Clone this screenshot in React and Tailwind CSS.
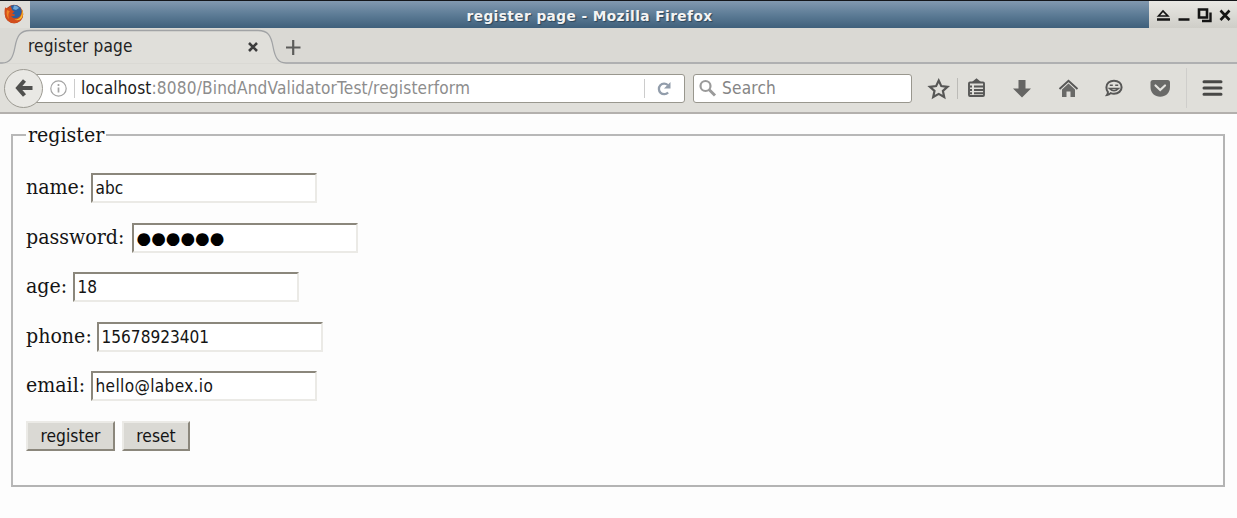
import React from "react";

const SANS = "font-['DejaVu_Sans_Condensed','DejaVu_Sans',sans-serif] [font-stretch:condensed]";
const SERIF = "font-['DejaVu_Serif_Condensed','DejaVu_Serif',serif] [font-stretch:condensed]";

function FirefoxLogo() {
  return (
    <svg width="20" height="20" viewBox="0 0 20 20">
      <circle cx="10" cy="10" r="9.2" fill="#b8431c" />
      <circle cx="10.5" cy="8.5" r="7.5" fill="#2b5f9e" />
      <path d="M10 1.5c2 0 4 1 5 2.500l-3 2-3-1z" fill="#6fa9d8" />
      <path d="M1.200 3.200c-.9 3-.9 6 .1 9.300C3 17 6.500 19.300 10.300 19.200c5 0 8.700-4 8.900-9 0-2-.6-4-1.700-5.400.5 2 .3 4-.7 5.700-1.200 3-4 4.300-6.700 3.700-1.500-.3-2.600-1.200-3-2.200 1.600.6 3 0 4.300-1-.8-1-2-.8-3-1 .3-1.500 1.500-1.600 2.300-2.500-1.200-.2-2.300-.8-2.800-2L6.800 2.200C5.600 2.600 4.700 3.200 4 4.200 3 4.200 1.800 3.800 1.200 3.200z" fill="#d24d1c" />
      <path d="M17.500 4.800c1 3.500.4 6.200-1.200 8.200-1.600 2-3.800 2.700-6 2.500 2.700 1.500 6 .8 7.700-2 1.400-2.700 1.200-6.200-.5-8.700z" fill="#f6c02e" />
      <path d="M3 6c-1 3.500-.2 7 2 9.200C4 12 4.200 9 5.800 7.200z" fill="#ef8426" />
    </svg>
  );
}

function TitleBar() {
  return (
    <div className="flex h-7 border-t border-[#14161a] bg-[#dfded9]">
      <div className="flex w-[30px] items-center pb-[2px] pl-[4px]"><FirefoxLogo /></div>
      <div className="flex flex-1 items-center justify-center bg-linear-to-b from-[#8299b0] via-[#5d7c96] to-[#3f607b]">
        <span className="mt-[4px] whitespace-nowrap font-['DejaVu_Sans',sans-serif] text-[13.700px] font-bold tracking-[0.430px] text-[#f4f4f4] [text-shadow:1px_1px_1px_#2c4559]">register page - Mozilla Firefox</span>
      </div>
      <svg width="88" height="27" viewBox="0 0 88 27" className="bg-linear-to-b from-[#e9e8e4] to-[#cfcec8]" fill="none" stroke="#151515" strokeWidth="2">
        <path d="M9.500 15 14 10l4.800 5z" strokeWidth="1.700" />
        <path d="M8 18.500h13M29.500 18.500h11" strokeWidth="2.600" />
        <path d="M50 8.500h8v8h-8z" strokeWidth="2.600" />
        <path d="M61.500 11.500v8.500H53" strokeWidth="2.400" />
        <path d="m71.500 9.500 9 9.500m0-9.500-9 9.500" strokeWidth="2.600" />
      </svg>
    </div>
  );
}

function TabBar() {
  return (
    <div className={`relative h-9 bg-[#dad9d4] ${SANS}`}>
      <svg width="1237" height="36" viewBox="0 0 1237 36" className="absolute inset-0">
        <path d="M0 35h2c8 0 11-5 13-16C17 8 20 2.500 30 2.500h228c10 0 13 5 15 16 2 11 5 16.500 13 16.500z" fill="#e0dfda" />
        <path d="M0 35h2c8 0 11-5 13-16C17 8 20 2.500 30 2.500h228c10 0 13 5 15 16 2 11 5 16.500 13 16.500h951" fill="none" stroke="#a1a3a5" strokeWidth="1.300" />
        <path d="m249 15 8 8m0-8-8 8" stroke="#3c3c3c" strokeWidth="2.600" />
        <path d="M286 19.500h14.500M293.200 12v15" stroke="#5c5c5a" strokeWidth="2.200" />
      </svg>
      <span className="relative ml-7 block pt-[6px] text-[17.100px] leading-[24px] tracking-[0.150px] text-[#222]">register page</span>
    </div>
  );
}

function ToolIcons() {
  return (
    <svg width="325" height="49" viewBox="912 64 325 49" fill="none" stroke="#575756" strokeWidth="2">
      <path d="m938.700 80.500 2.600 5.600 6.200.7-4.600 4.200 1.300 6-5.500-3.100-5.500 3.100 1.300-6-4.600-4.200 6.200-.7z" strokeWidth="2.200" />
      <path d="M957.500 78v21" stroke="#bcbbb7" strokeWidth="1" />
      <path d="M970 82.500h13q1 0 1 1v11.500q0 1-1 1h-13q-1 0-1-1V83.500q0-1 1-1zM974 86.500h10M974 90h10M974 93.300h10M970 86.500h2M970 90h2M970 93.300h2" strokeWidth="1.900" />
      <path d="m972 82 4.500-3.700L981 82z" fill="#575756" stroke="none" />
      <path d="M1018.500 80h7v8.500h5.500l-9 9-9-9h5.500z" fill="#656563" stroke="none" />
      <path d="m1059.500 89 9-8.200 9 8.200" strokeWidth="2" />
      <path d="m1062 89.500 6.500-6 6.500 6V97h-4.500v-5.500h-4V97H1062z" fill="#696967" stroke="none" />
      <path d="M1114 80.700c4.400 0 7.600 2.700 7.600 6.500s-3.200 6.500-7.600 6.500c-1.200 0-2.300-.2-3.300-.6-1 1-2.300 1.700-3.700 1.900.7-1 1-2 .9-3-1-1.200-1.500-2.900-1.500-4.800 0-3.800 3.200-6.500 7.600-6.500z" />
      <path d="M1109.800 85.200h3M1115.200 85.200h3M1109.500 88.500q4.500 4.500 9 0z" strokeWidth="1.600" />
      <path d="M1153 80h14.500q2.500 0 2.500 2.500v4.500c0 6-4.500 9.800-9.800 9.800s-9.700-3.800-9.700-9.800v-4.500q0-2.500 2.500-2.500z" fill="#6a6a68" stroke="none" />
      <path d="m1155.500 85.500 4.700 4.500 4.800-4.500" stroke="#e4e3df" strokeWidth="2.200" strokeLinecap="round" />
      <path d="M1186.500 68v40" stroke="#cfcecb" strokeWidth="1" />
      <path d="M1204 81.800h17M1204 88h17M1204 94.200h17" stroke="#484846" strokeWidth="3" strokeLinecap="round" />
    </svg>
  );
}

function NavBar() {
  return (
    <div className={`flex h-[50px] items-center border-b-2 border-[#b3b0ad] bg-[#e0dfda] text-[17.100px] ${SANS}`}>
      <div className="z-10 ml-1 flex size-[39px] items-center justify-center rounded-full border border-[#9c9a92] bg-[#e9e8e4]">
        <svg width="18" height="18" viewBox="0 0 18 18" fill="none" stroke="#50504e" strokeWidth="4">
          <path d="M9.500 1.500 3 9l6.500 7.500M3 9h14.500" />
        </svg>
      </div>
      <div className="-ml-2 flex h-[29px] w-[650px] items-center rounded-r-[3px] border border-[#99978e] bg-white">
        <svg width="40" height="27" viewBox="0 0 40 27" fill="none" stroke="#a3a3a3">
          <circle cx="22.500" cy="13.500" r="7.700" strokeWidth="1.200" />
          <path d="M22.500 12.500v5M22.500 9v2" strokeWidth="1.700" />
          <path d="M38.500 4v19" stroke="#ccc" />
        </svg>
        <span className="ml-[5px] flex-1 pt-[2px] whitespace-nowrap tracking-[0.165px] text-[#8d8d8d]"><span className="text-[#1c1c1c]">localhost</span>:8080/BindAndValidatorTest/registerform</span>
        <svg width="40" height="27" viewBox="0 0 40 27" fill="none">
          <path d="M.5 4v19" stroke="#ccc" />
          <path d="M23.800 10a5.300 5.300 0 1 0 .3 7.500" stroke="#929dab" strokeWidth="2.300" />
          <path d="M26.500 7v6.500H20z" fill="#929dab" />
        </svg>
      </div>
      <div className="ml-[8px] flex h-[29px] w-[219px] items-center rounded-[3px] border border-[#99978e] bg-white text-[#858585]">
        <svg width="28" height="27" viewBox="0 0 28 27" fill="none" stroke="#9a9a9a">
          <circle cx="11.500" cy="11" r="5" strokeWidth="2.200" />
          <path d="m15 14.500 6 6" strokeWidth="3" />
        </svg>
        <span className="pt-[2px] tracking-[0.200px]">Search</span>
      </div>
      <ToolIcons />
    </div>
  );
}

function Field({ label, labelWidth, children }) {
  return (
    <div className="mb-[19.600px] flex h-[30px]">
      <label className={`shrink-0 whitespace-nowrap leading-[28px] ${labelWidth}`}>{label}</label>
      <div className={`h-[30px] w-[226px] border-2 border-t-[#8b877c] border-r-[#ebeae6] border-b-[#ebeae6] border-l-[#8b877c] bg-white pl-[2.500px] text-[17.100px] leading-[26px] ${SANS}`}>{children}</div>
    </div>
  );
}

function FormButton({ children, width }) {
  return (
    <button className={`h-[30px] border-2 border-t-[#ebeae6] border-r-[#8b877c] border-b-[#8b877c] border-l-[#ebeae6] bg-[#dad9d4] text-[17.300px] leading-[26px] ${width} ${SANS}`}>{children}</button>
  );
}

export default function App() {
  return (
    <div className="flex h-[518px] w-[1237px] flex-col overflow-hidden bg-[#fdfdfd] text-[#141414]">
      <TitleBar />
      <TabBar />
      <NavBar />
      <main className={`pt-[7px] pl-[11px] text-[21.150px] ${SERIF}`}>
        <fieldset className="h-[366px] w-[1214px] border-2 border-t-[#b8b8b8] border-r-[#b4b4b4] border-b-[#b4b4b4] border-l-[#b8b8b8] px-[13px]">
          <legend className="h-[28px] px-[2px] leading-[28px]">register</legend>
          <div className="pt-[24px]">
            <Field label="name:" labelWidth="w-[65px]">abc</Field>
            <Field label="password:" labelWidth="w-[106px]"><span className="font-['DejaVu_Sans',sans-serif] text-[16.800px] text-black [font-stretch:normal]">●●●●●●</span></Field>
            <Field label="age:" labelWidth="w-[47px]">18</Field>
            <Field label="phone:" labelWidth="w-[71px]">15678923401</Field>
            <Field label="email:" labelWidth="w-[65px]"><span className="tracking-[0.350px]">hello@labex.io</span></Field>
            <div className="flex gap-[7px]">
              <FormButton width="w-[89px]">register</FormButton>
              <FormButton width="w-[68px]">reset</FormButton>
            </div>
          </div>
        </fieldset>
      </main>
    </div>
  );
}
